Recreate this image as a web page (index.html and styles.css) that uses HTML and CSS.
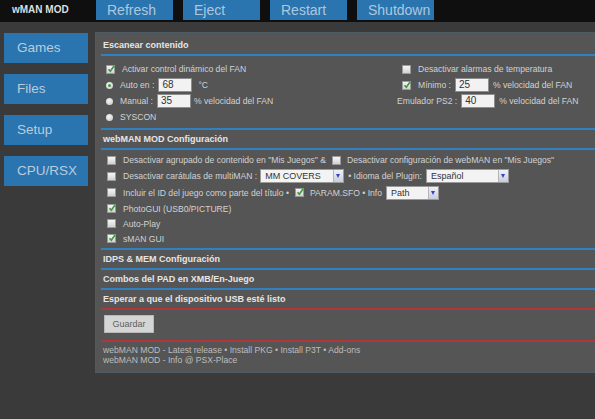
FILE: index.html
```html
<!DOCTYPE html>
<html lang="es">
<head>
<meta charset="utf-8">
<title>wMAN MOD</title>
<link rel="stylesheet" href="styles.css">
</head>
<body>
<header class="topbar">
  <div class="brand">wMAN MOD</div>
  <nav class="topnav">
    <a class="tbtn">Refresh</a>
    <a class="tbtn">Eject</a>
    <a class="tbtn">Restart</a>
    <a class="tbtn">Shutdown</a>
  </nav>
</header>
<div class="layout">
  <aside class="sidenav">
    <a class="sbtn">Games</a>
    <a class="sbtn">Files</a>
    <a class="sbtn">Setup</a>
    <a class="sbtn">CPU/RSX</a>
  </aside>
  <main class="panel">
    <h2 class="sec-head">Escanear contenido</h2>
    <div class="sec-body fan">
      <div class="col">
        <div class="row"><span class="cb"><svg viewBox="0 0 8 8"><path d="M1.5 4.2 L3.3 6.2 L7.2 0.8"/></svg></span>Activar control dinámico del FAN</div>
        <div class="row"><span class="rb on"></span>Auto en :<span class="inp">68</span><span class="unit">°C</span></div>
        <div class="row"><span class="rb"></span>Manual :<span class="inp manual">35</span>% velocidad del FAN</div>
        <div class="row"><span class="rb"></span>SYSCON</div>
      </div>
      <div class="col">
        <div class="row ind"><span class="cb empty"></span>Desactivar alarmas de temperatura</div>
        <div class="row ind"><span class="cb"><svg viewBox="0 0 8 8"><path d="M1.5 4.2 L3.3 6.2 L7.2 0.8"/></svg></span>Mínimo :<span class="inp">25</span>% velocidad del FAN</div>
        <div class="row">Emulador PS2 :<span class="inp">40</span>% velocidad del FAN</div>
      </div>
    </div>

    <h2 class="sec-head">webMAN MOD Configuración</h2>
    <div class="sec-body conf">
      <div class="row h16"><span class="cb empty"></span>Desactivar agrupado de contenido en "Mis Juegos" &amp;<span class="cb empty mid"></span>Desactivar configuración de webMAN en "Mis Juegos"</div>
      <div class="row h16"><span class="cb empty"></span>Desactivar carátulas de multiMAN :<span class="sel w84"><span class="sel-text">MM COVERS</span><span class="sel-arrow"></span></span>• Idioma del Plugin:<span class="sel w83"><span class="sel-text">Español</span><span class="sel-arrow"></span></span></div>
      <div class="row h17"><span class="cb empty"></span>Incluir el ID del juego como parte del título •<span class="cb mid"><svg viewBox="0 0 8 8"><path d="M1.5 4.2 L3.3 6.2 L7.2 0.8"/></svg></span>PARAM.SFO • Info<span class="sel w53"><span class="sel-text">Path</span><span class="sel-arrow"></span></span></div>
      <div class="row h15"><span class="cb"><svg viewBox="0 0 8 8"><path d="M1.5 4.2 L3.3 6.2 L7.2 0.8"/></svg></span>PhotoGUI (USB0/PICTURE)</div>
      <div class="row h15"><span class="cb empty"></span>Auto-Play</div>
      <div class="row h15"><span class="cb"><svg viewBox="0 0 8 8"><path d="M1.5 4.2 L3.3 6.2 L7.2 0.8"/></svg></span>sMAN GUI</div>
    </div>

    <h2 class="sec-head">IDPS &amp; MEM Configuración</h2>
    <h2 class="sec-head">Combos del PAD en XMB/En-Juego</h2>
    <h2 class="sec-head red">Esperar a que el dispositivo USB esté listo</h2>

    <div class="save"><button class="btn-save">Guardar</button></div>

    <footer class="links">
      <p>webMAN MOD - Latest release • Install PKG • Install P3T • Add-ons</p>
      <p>webMAN MOD - Info @ PSX-Place</p>
    </footer>
  </main>
</div>
</body>
</html>
```

FILE: styles.css
```css
html, body {
  margin: 0;
  padding: 0;
}
body {
  width: 595px;
  height: 419px;
  overflow: hidden;
  background: #3a3a3a;
  font-family: "Liberation Sans", Arial, sans-serif;
  color: #d2d2d2;
}

/* top bar */
.topbar {
  display: flex;
  height: 22px;
  background: #0f0f0f;
}
.brand {
  width: 96px;
  box-sizing: border-box;
  padding-left: 12px;
  font-size: 10px;
  font-weight: bold;
  color: #dedede;
  line-height: 20px;
}
.topnav {
  display: flex;
  gap: 10px;
}
.tbtn {
  width: 77px;
  height: 20px;
  box-sizing: border-box;
  padding-left: 11px;
  background: #2a74b0;
  color: #adc8dc;
  font-size: 14px;
  line-height: 20px;
}

/* layout */
.layout {
  display: flex;
  margin-top: 10px;
}
.sidenav {
  width: 95px;
  flex: none;
  box-sizing: border-box;
  padding: 1px 0 0 4px;
  display: flex;
  flex-direction: column;
  gap: 11px;
}
.sbtn {
  width: 84px;
  height: 30px;
  box-sizing: border-box;
  padding-left: 13px;
  background: #2a74b0;
  color: #b9ccdc;
  font-size: 13.5px;
  line-height: 30px;
}

.panel {
  flex: 1;
  background: #555555;
  border: 1px solid #4d5b64;
  border-right: 0;
  padding: 3px 0 7px 0;
}

/* sections */
.sec-head {
  margin: 0 0 0 5px;
  height: 20px;
  box-sizing: border-box;
  padding-left: 2px;
  border-bottom: 2px solid #3180bf;
  font-size: 9px;
  font-weight: bold;
  line-height: 18px;
  color: #e6e6e6;
}
.sec-head.red {
  border-bottom-color: #b0363a;
}
.sec-body {
  margin-left: 5px;
  border-bottom: 2px solid #3180bf;
  font-size: 8.6px;
}
.fan {
  display: grid;
  grid-template-columns: 291px 1fr;
  padding: 5px 0 3px 5px;
}
.conf {
  padding: 2px 0 2px 6px;
}
.col {
  display: flex;
  flex-direction: column;
}
.row {
  display: flex;
  align-items: center;
  height: 16px;
  white-space: nowrap;
}
.row.ind {
  padding-left: 5px;
}
.row.h16 { height: 16px; }
.row.h17 { height: 17px; }
.row.h15 { height: 15px; }

/* controls */
.cb {
  width: 7px;
  height: 7px;
  flex: none;
  margin-right: 7px;
  background: linear-gradient(#f6f6f6, #d2d2d2);
  border: 0.5px solid #9a9a9a;
  position: relative;
}
.cb svg {
  position: absolute;
  left: 0;
  top: -1px;
  width: 8px;
  height: 8px;
  overflow: visible;
}
.cb svg path {
  fill: none;
  stroke: #3c9a3c;
  stroke-width: 1.6;
}
.cb.mid {
  margin-left: 6px;
  margin-right: 6px;
}
.rb {
  width: 7px;
  height: 7px;
  flex: none;
  margin-right: 7px;
  border-radius: 50%;
  background: radial-gradient(circle at 40% 35%, #f6f6f6, #c4c4c4);
  position: relative;
}
.rb.on::after {
  content: "";
  position: absolute;
  left: 2px;
  top: 2px;
  width: 3px;
  height: 3px;
  border-radius: 50%;
  background: #3c9a3c;
}
.inp {
  width: 34px;
  height: 14px;
  box-sizing: border-box;
  margin: 0 4px 0 4px;
  padding-left: 3px;
  background: #f2f2f2;
  border: 1px solid #8e8e8e;
  color: #333;
  font-size: 10px;
  line-height: 12px;
}
.inp.manual {
  margin-right: 3px;
}
.unit {
  margin-left: 2px;
}
.sel {
  display: flex;
  height: 14px;
  box-sizing: border-box;
  margin: 0 4px 0 4px;
  background: #f3f3f3;
  border: 1px solid #9a9a9a;
  color: #333;
  font-size: 9px;
}
.sel.w84 { width: 84px; margin-left: 3px; }
.sel.w83 { width: 83px; }
.sel.w53 { width: 53px; }
.sel-text {
  flex: 1;
  padding-left: 4px;
  line-height: 12px;
}
.sel-arrow {
  width: 9px;
  background: linear-gradient(#eef1f6, #c7cedb);
  border-left: 1px solid #b5b5b5;
  position: relative;
}
.sel-arrow::after {
  content: "";
  position: absolute;
  left: 2px;
  top: 4px;
  border-left: 2.5px solid transparent;
  border-right: 2.5px solid transparent;
  border-top: 4px solid #3a3fc8;
}

/* save */
.save {
  margin-left: 5px;
  padding: 5px 0 7px 3px;
  border-bottom: 2px solid #b0363a;
}
.btn-save {
  display: block;
  width: 50px;
  height: 18px;
  margin: 0;
  padding: 0;
  background: #d5d5d5;
  border: 1px solid #b8b8b8;
  border-radius: 0;
  color: #5e5e5e;
  font-family: "Liberation Sans", Arial, sans-serif;
  font-size: 9px;
}

/* footer */
.links {
  margin-left: 5px;
  padding: 3px 0 0 2px;
  font-size: 8.6px;
  color: #bdbdbd;
}
.links p {
  margin: 0;
  line-height: 10px;
}
```
